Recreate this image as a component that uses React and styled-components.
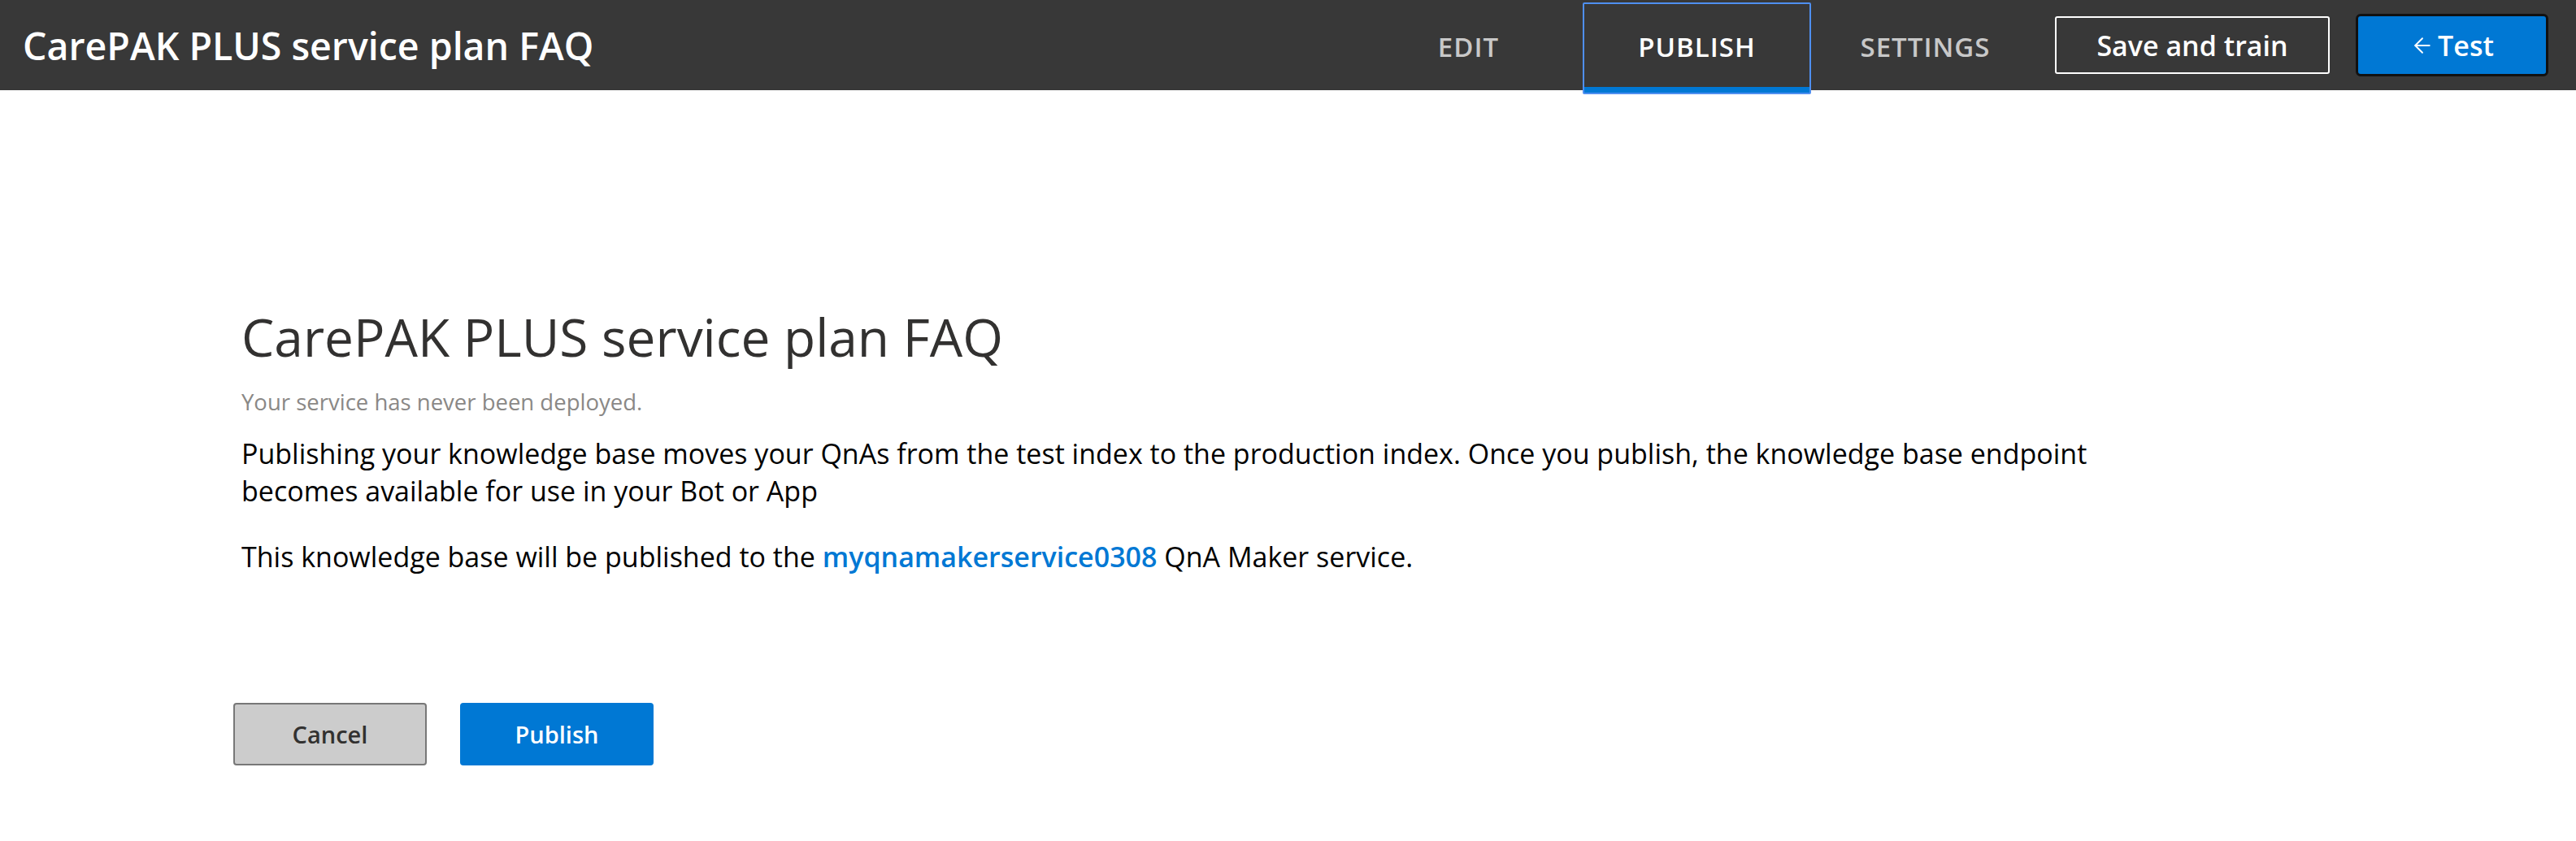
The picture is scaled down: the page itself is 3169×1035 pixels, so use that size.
import React from "react"
import styled, { createGlobalStyle } from "styled-components"
import { ArrowLeft } from "lucide-react"

const GlobalStyle = createGlobalStyle`
  html, body {
    margin: 0;
    padding: 0;
    background: #ffffff;
  }
  body {
    font-family: "Segoe UI", "Open Sans", "Noto Sans", sans-serif;
  }
`

const Page = styled.div`
  width: 3169px;
  min-height: 1035px;
  background: #ffffff;
`

const Header = styled.header`
  display: flex;
  align-items: center;
  height: 111px;
  padding: 0 34px 0 28px;
  background: #383838;
  box-sizing: border-box;
`

const Title = styled.h1`
  margin: 0;
  flex: 1;
  font-size: 46.5px;
  font-weight: 600;
  color: #ffffff;
  white-space: nowrap;
`

const Nav = styled.nav`
  display: flex;
  align-self: flex-start;
  margin-right: 19px;
`

const Tab = styled.a`
  display: flex;
  align-items: center;
  justify-content: center;
  box-sizing: border-box;
  width: 281px;
  height: 113px;
  margin-top: 3px;
  padding-bottom: 4px;
  font-size: 33px;
  font-weight: 600;
  letter-spacing: 1px;
  color: ${p => (p.$active ? "#ffffff" : "#c8c8c8")};
  border: 2px solid ${p => (p.$active ? "#4f8ff0" : "transparent")};
  border-radius: 2px;
  box-shadow: ${p => (p.$active ? "inset 0 -7px 0 #0078d4" : "none")};
  cursor: pointer;
  position: relative;
  z-index: 1;
`

const Actions = styled.div`
  display: flex;
  align-items: center;
  gap: 32px;
`

const OutlineButton = styled.button`
  display: flex;
  align-items: center;
  justify-content: center;
  width: 338px;
  height: 71px;
  border: 2px solid #ffffff;
  border-radius: 3px;
  background: transparent;
  color: #ffffff;
  font-family: inherit;
  font-size: 34px;
  font-weight: 600;
`

const TestButton = styled.button`
  display: flex;
  align-items: center;
  justify-content: center;
  gap: 4px;
  width: 237px;
  height: 77px;
  border: 3px solid #111111;
  border-radius: 6px;
  background: #0078d4;
  color: #ffffff;
  font-family: inherit;
  font-size: 34px;
  font-weight: 600;
`

const Main = styled.main`
  padding: 264px 0 0 297px;
`

const Heading = styled.h2`
  margin: 0;
  font-size: 64px;
  line-height: 80px;
  font-weight: 400;
  color: #323130;
`

const Status = styled.div`
  margin-top: 22px;
  font-size: 27.5px;
  line-height: 36px;
  color: #8a8886;
`

const Text = styled.p`
  margin: ${p => p.$gap || 0}px 0 0;
  max-width: 2310px;
  font-size: 34px;
  line-height: 46px;
  color: #000000;
`

const Link = styled.a`
  color: #0078d4;
  font-weight: 600;
  text-decoration: none;
`

const ButtonRow = styled.div`
  display: flex;
  gap: 41px;
  margin: 157px 0 0 -10px;
`

const Button = styled.button`
  width: 238px;
  height: 77px;
  border-radius: 4px;
  font-family: inherit;
  font-size: 29px;
  font-weight: 600;
  border: ${p => (p.$primary ? "none" : "2px solid #777777")};
  background: ${p => (p.$primary ? "#0078d4" : "#cccccc")};
  color: ${p => (p.$primary ? "#ffffff" : "#323130")};
`

export default function App() {
  return (
    <Page>
      <GlobalStyle />
      <Header>
        <Title>CarePAK PLUS service plan FAQ</Title>
        <Nav>
          <Tab>EDIT</Tab>
          <Tab $active>PUBLISH</Tab>
          <Tab>SETTINGS</Tab>
        </Nav>
        <Actions>
          <OutlineButton>Save and train</OutlineButton>
          <TestButton>
            <ArrowLeft size={30} strokeWidth={1.5} />
            Test
          </TestButton>
        </Actions>
      </Header>
      <Main>
        <Heading>CarePAK PLUS service plan FAQ</Heading>
        <Status>Your service has never been deployed.</Status>
        <Text $gap={22}>
          Publishing your knowledge base moves your QnAs from the test index to the production index. Once you publish, the knowledge base endpoint becomes available for use in your Bot or App
        </Text>
        <Text $gap={35}>
          This knowledge base will be published to the <Link>myqnamakerservice0308</Link> QnA Maker service.
        </Text>
        <ButtonRow>
          <Button>Cancel</Button>
          <Button $primary>Publish</Button>
        </ButtonRow>
      </Main>
    </Page>
  )
}
